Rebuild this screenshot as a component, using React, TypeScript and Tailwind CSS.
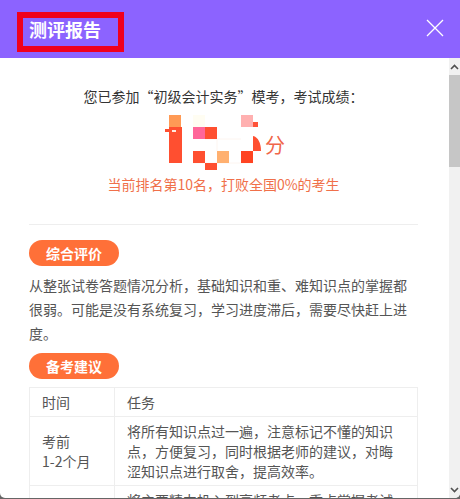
const blocks: [number, number, number, number, string][] = [
  [169, 115, 12, 12, "#ff9a55"],
  [193, 115, 12, 12, "#fffdf2"],
  [241, 115, 12, 12, "#ffb0b0"],
  [253, 122, 5, 5, "#ff5238"],
  [169, 127, 13, 36, "#ff4f30"],
  [165, 129, 5, 3, "#ff4f30"],
  [193, 127, 12, 12, "#ff6699"],
  [205, 127, 12, 12, "#ff4f30"],
  [193, 151, 12, 12, "#ff4f30"],
  [217, 151, 12, 12, "#ffb070"],
  [241, 151, 12, 12, "#ff4422"],
  [205, 163, 12, 7, "#ff4f30"],
];

function ScoreArt() {
  return (
    <svg className="absolute left-[131px] top-[5px]" width="110" height="65" viewBox="160 110 110 65">
      <path d="M205 139h36M217 139v12M193 163h60" stroke="#fdf5f0" strokeWidth="1" fill="none" />
      {blocks.map(([x, y, w, h, c], i) => (
        <rect key={i} x={x} y={y} width={w} height={h} fill={c} />
      ))}
      <path d="M172 130h4v2h-4z" fill="#ffe9df" />
      <path d="M253 136c5 1 8 7 8 15h-8z" fill="#ff4f30" />
    </svg>
  );
}

export default function App() {
  const font = "font-['Noto_Sans_CJK_SC','Liberation_Sans',sans-serif]";
  const tag = "flex h-[26px] w-[90px] items-center justify-center rounded-full bg-[#ff7038] text-[14px] font-bold text-white";
  const cell = "border border-[#eeeeee] pl-[12px]";
  return (
    <div className={`flex h-[499px] w-[460px] flex-col overflow-hidden bg-[#666666] ${font}`}>
      <div className="flex h-[498px] flex-col overflow-hidden rounded-b-[5px] bg-white">
        <header className="flex h-[58px] shrink-0 justify-between bg-[#8c63ff] pl-[17px] pr-[16px]">
          <div className="mt-[12px] flex h-[40px] w-[107px] items-center border-[6px] border-[#f0001c] pb-[6px] pl-[6px] text-[18px] font-bold text-white">
            测评报告
          </div>
          <svg width="18" height="18" viewBox="0 0 18 18" className="mt-[19px] text-white" fill="none" stroke="currentColor" strokeWidth="1.3">
            <path d="M1 1 17 17M17 1 1 17" />
          </svg>
        </header>
        <div className="flex min-h-0 flex-1">
          <main className="h-full w-[449px] overflow-hidden pl-[29px] pr-[31px]">
            <p className="pt-[29px] text-center text-[14px] leading-[18px] text-[#333]">
              您已参加“初级会计实务”模考，考试成绩：
            </p>
            <div className="relative h-[70px]">
              <ScoreArt />
              <span className="absolute left-[236px] top-[27px] text-[20px] leading-[26px] text-[#f0664a]">分</span>
            </div>
            <p className="text-center text-[14px] leading-[18px] text-[#f0704a]">当前排名第10名，打败全国0%的考生</p>
            <div className="mt-[31px] h-px bg-[#eeeeee]" />
            <div className={`mt-[15px] ${tag}`}>综合评价</div>
            <p className="mt-[7px] text-[14px] leading-[24px] text-[#555]">
              从整张试卷答题情况分析，基础知识和重、难知识点的掌握都很弱。可能是没有系统复习，学习进度滞后，需要尽快赶上进度。
            </p>
            <div className={`mt-[8px] ${tag}`}>备考建议</div>
            <table className="mt-[8px] w-[389px] table-fixed border-collapse text-[14px] leading-[20px] text-[#555]">
              <tbody>
                <tr className="h-[29px]">
                  <td className={`w-[85px] ${cell}`}>时间</td>
                  <td className={cell}>任务</td>
                </tr>
                <tr className="h-[69px]">
                  <td className={cell}>考前<br />1-2个月</td>
                  <td className={`${cell} pr-[24px]`}>
                    将所有知识点过一遍，注意标记不懂的知识点，方便复习，同时根据老师的建议，对晦涩知识点进行取舍，提高效率。
                  </td>
                </tr>
                <tr className="h-[69px]">
                  <td className={cell} />
                  <td className={`${cell} pr-[24px] pt-[4px] align-top`}>
                    将主要精力投入到高频考点，重点掌握考试
                  </td>
                </tr>
              </tbody>
            </table>
          </main>
          <aside className="flex h-full w-[11px] flex-col bg-[#f1f1f1]">
            <div className="flex h-[17px] items-center justify-center">
              <svg width="9" height="6" viewBox="0 0 9 6" fill="none" stroke="#505050" strokeWidth="1.6"><path d="M1 5 4.5 1.5 8 5" /></svg>
            </div>
            <div className="h-[92px] bg-[#c6c6c6]" />
            <div className="flex-1" />
            <div className="flex h-[17px] items-center justify-center">
              <svg width="9" height="6" viewBox="0 0 9 6" fill="none" stroke="#505050" strokeWidth="1.6"><path d="M1 1 4.5 4.5 8 1" /></svg>
            </div>
          </aside>
        </div>
      </div>
    </div>
  );
}
